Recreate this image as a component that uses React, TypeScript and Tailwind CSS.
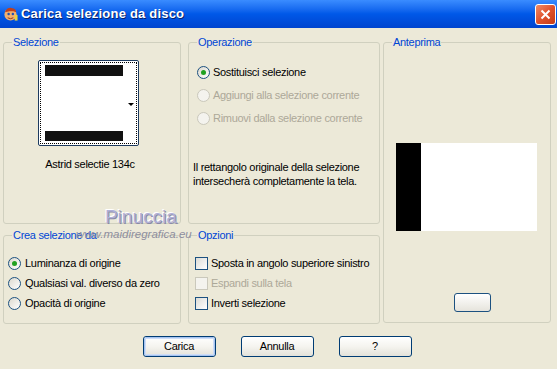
import React from "react";

function Radio({ checked, disabled }: { checked?: boolean; disabled?: boolean }) {
  return (
    <span
      className={`relative inline-flex h-[13px] w-[13px] shrink-0 items-center justify-center rounded-full border ${
        disabled
          ? "border-[#CAC8BB] bg-[#F4F3EE]"
          : "border-[#1C5180] bg-gradient-to-br from-[#DCD9CE] to-white"
      }`}
    >
      {checked && <span className="h-[5px] w-[5px] rounded-full bg-[#21A121]" />}
    </span>
  );
}

function Check({ disabled }: { disabled?: boolean }) {
  return (
    <span
      className={`inline-block h-[13px] w-[13px] shrink-0 border ${
        disabled
          ? "border-[#CAC8BB] bg-[#F4F3EE]"
          : "border-[#1C5180] bg-gradient-to-br from-[#DCDCD7] to-white"
      }`}
    />
  );
}

function Group({
  title,
  className,
  children,
}: {
  title: string;
  className: string;
  children?: React.ReactNode;
}) {
  return (
    <fieldset className={`rounded-[3px] border border-[#D0D0BF] px-0 ${className}`}>
      <legend className="ml-[8px] px-[1px] text-[#0046D5] leading-[13px]">{title}</legend>
      {children}
    </fieldset>
  );
}

function XpButton({ label, primary }: { label: string; primary?: boolean }) {
  return (
    <button className="h-[21px] w-[73px] rounded-[3px] border border-[#003C74] bg-gradient-to-b from-white via-[#F5F4EF] to-[#E3E2DA] p-0 text-black">
      <span
        className={`flex h-full w-full items-center justify-center rounded-[2px] ${
          primary ? "border border-[#A6C4F0] shadow-[inset_0_0_0_1px_#CEDDF7]" : ""
        }`}
      >
        {label}
      </span>
    </button>
  );
}

export default function App() {
  return (
    <div
      className="relative h-[369px] w-[557px] overflow-hidden bg-[#ECE9D8] text-[11px] tracking-[-0.3px] text-black"
      style={{ fontFamily: '"Liberation Sans", Arial, sans-serif' }}
    >
      {/* title bar */}
      <div className="flex h-[28px] items-center bg-gradient-to-b from-[#3A8CFF] via-[#0058E8] to-[#0044CF] pl-[3px] pr-[1px]">
        <svg width="15" height="16" viewBox="0 0 16 16" className="shrink-0">
          <ellipse cx="8" cy="8.5" rx="6.5" ry="6.5" fill="#F0B070" />
          <path d="M2 6 Q4 1 9 1.5 Q14 2 14 6 L11 5 L7 5 Z" fill="#C0401C" />
          <circle cx="6" cy="8" r="1.3" fill="#2050B0" />
          <circle cx="10.5" cy="8" r="1.3" fill="#2050B0" />
          <path d="M5 12 Q8 14 11 12" stroke="#903010" strokeWidth="1" fill="none" />
          <rect x="12.5" y="9" width="3" height="6" fill="#E8D040" />
        </svg>
        <span className="ml-[3px] text-[13px] font-bold tracking-[0.2px] text-white [text-shadow:1px_1px_0_#0A246A]">
          Carica selezione da disco
        </span>
        <div className="ml-auto flex h-[21px] w-[21px] items-center justify-center rounded-[3px] border border-white bg-gradient-to-br from-[#EE8A66] via-[#E0522C] to-[#C43A16]">
          <svg width="11" height="11" viewBox="0 0 11 11">
            <path d="M1.5 1.5 L9.5 9.5 M9.5 1.5 L1.5 9.5" stroke="white" strokeWidth="2" />
          </svg>
        </div>
      </div>

      {/* body */}
      <div className="flex pl-[3px] pt-[8px]">
        <div className="flex w-[377px] flex-col gap-[5px]">
          <div className="flex gap-[7px]">
            <Group title="Selezione" className="h-[188px] w-[178px]">
              <div className="flex flex-col items-center pt-[11px]">
                <div className="ml-[-8px] h-[86px] w-[101px] rounded-[2px] border border-[#1C3A5F] bg-white p-[1px]">
                  <div className="relative flex h-full w-full flex-col border border-dotted border-black px-[4px] py-[2px]">
                    <div className="h-[11px] w-[78px] bg-[#111]" />
                    <div className="flex-1" />
                    <div className="h-[10px] w-[78px] bg-[#111]" />
                    <span className="absolute right-[2px] top-[40px] h-0 w-0 border-x-[3px] border-t-[3px] border-x-transparent border-t-black" />
                  </div>
                </div>
                <div className="mt-[12px] ml-[-4px] whitespace-nowrap leading-[13px]">Astrid selectie 134c</div>
              </div>
            </Group>
            <Group title="Operazione" className="h-[188px] w-[192px]">
              <div className="flex flex-col gap-[10px] pl-[8px] pt-[17px]">
                <label className="flex items-center gap-[3px] whitespace-nowrap leading-[13px]">
                  <Radio checked />
                  Sostituisci selezione
                </label>
                <label className="flex items-center gap-[3px] whitespace-nowrap leading-[13px] text-[#ACA899]">
                  <Radio disabled />
                  Aggiungi alla selezione corrente
                </label>
                <label className="flex items-center gap-[3px] whitespace-nowrap leading-[13px] text-[#ACA899]">
                  <Radio disabled />
                  Rimuovi dalla selezione corrente
                </label>
              </div>
              <p className="mt-[35px] pl-[4px] leading-[14px]">
                Il rettangolo originale della selezione
                <br />
                intersecherà completamente la tela.
              </p>
            </Group>
          </div>
          <div className="flex gap-[7px]">
            <Group title="Crea selezione da" className="h-[95px] w-[178px]">
              <div className="flex flex-col gap-[7px] pl-[4px] pt-[15px]">
                <label className="flex items-center gap-[4px] whitespace-nowrap leading-[13px]">
                  <Radio checked />
                  Luminanza di origine
                </label>
                <label className="flex items-center gap-[4px] whitespace-nowrap leading-[13px]">
                  <Radio />
                  Qualsiasi val. diverso da zero
                </label>
                <label className="flex items-center gap-[4px] whitespace-nowrap leading-[13px]">
                  <Radio />
                  Opacità di origine
                </label>
              </div>
            </Group>
            <Group title="Opzioni" className="h-[95px] w-[192px]">
              <div className="flex flex-col gap-[7px] pl-[6px] pt-[15px]">
                <label className="flex items-center gap-[3px] whitespace-nowrap leading-[13px]">
                  <Check />
                  Sposta in angolo superiore sinistro
                </label>
                <label className="flex items-center gap-[3px] whitespace-nowrap leading-[13px] text-[#ACA899]">
                  <Check disabled />
                  Espandi sulla tela
                </label>
                <label className="flex items-center gap-[3px] whitespace-nowrap leading-[13px]">
                  <Check />
                  Inverti selezione
                </label>
              </div>
            </Group>
          </div>
        </div>

        <Group title="Anteprima" className="ml-[3px] h-[287px] w-[168px]">
          <div className="flex flex-col items-center">
            <div className="mt-[94px] ml-[-2px] flex h-[88px] w-[141px] bg-white">
              <div className="h-full w-[25px] bg-black" />
            </div>
            <div className="mt-[62px] ml-[10px] h-[19px] w-[37px] rounded-[3px] border border-[#1C5180] bg-gradient-to-b from-white to-[#E6E4DC]" />
          </div>
        </Group>
      </div>

      {/* buttons */}
      <div className="mt-[12px] flex justify-center gap-[25px] pr-[3px]">
        <XpButton label="Carica" primary />
        <XpButton label="Annulla" />
        <XpButton label="?" />
      </div>

      {/* watermark */}
      <div className="pointer-events-none absolute left-[76px] top-[206px] flex flex-col items-center tracking-[0px]">
        <span className="ml-[14px] text-[19px] leading-[22px] text-[#B0B0D6] [text-shadow:1px_1px_0_#8A8AA8,-1px_-1px_0_#ffffff]">
          Pinuccia
        </span>
        <span className="text-[11.5px] italic leading-[13px] text-[#8E8E9E]">www.maidiregrafica.eu</span>
      </div>
    </div>
  );
}
